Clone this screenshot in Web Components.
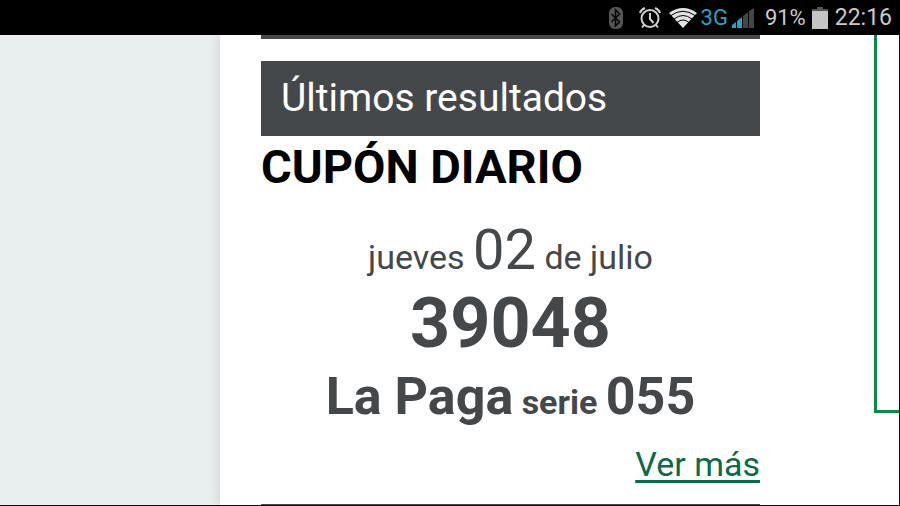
<!DOCTYPE html>
<html lang="es">
<head>
  <meta charset="utf-8">
  <meta name="viewport" content="width=device-width, initial-scale=1">
  <title>Últimos resultados</title>
  <style>
    body {
      margin: 0;
      background-color: #000;
      font-family: Roboto, "Liberation Sans", sans-serif;
    }
  </style>
</head>
<body>
  <phone-screen>
    <status-bar slot="status" network="3G" battery="91%" time="22:16"></status-bar>
    <results-panel heading="Últimos resultados">
      <draw-result></draw-result>
    </results-panel>
    <side-box slot="side"></side-box>
  </phone-screen>

<script>
class PhoneScreen extends HTMLElement {

  constructor() {
    super();
    this.shadowDOM = this.attachShadow({ mode: "open" });
    this.shadowDOM.innerHTML = `
      <style>
        :host {
          display: flex;
          flex-direction: column;
          height: 100vh;
          overflow: hidden;
        }
        .view {
          flex: 1;
          min-height: 0;
          display: flex;
          overflow: hidden;
          border-right: 1px solid #111;
          border-bottom: 1px solid #111;
          background-color: #e9eeee;
        }
        .page {
          flex: 1;
          display: flex;
          justify-content: space-between;
          margin-left: 220px;
          padding-left: 41px;
          background-color: #fff;
          box-shadow: 0 0 12px rgba(0, 0, 0, 0.14);
        }
        .content {
          flex: 1;
          margin-right: 114px;
        }
      </style>
      <slot name="status"></slot>
      <div class="view">
        <main class="page">
          <div class="content"><slot></slot></div>
          <slot name="side"></slot>
        </main>
      </div>`;
  }
}

class StatusBar extends HTMLElement {

  constructor() {
    super();
    this.shadowDOM = this.attachShadow({ mode: "open" });
  }

  connectedCallback() {
    this.render();
  }

  render() {
    this.shadowDOM.innerHTML = `
      <style>
        :host {
          display: flex;
          align-items: center;
          justify-content: flex-end;
          height: 35px;
          padding-right: 8px;
          background-color: #000;
          color: #c9c9c9;
          font-size: 23px;
          line-height: 36px;
        }
        svg {
          display: block;
        }
        .clock {
          margin-left: 15px;
        }
        .wifi {
          margin-left: 8px;
        }
        .network {
          margin-left: 4px;
          color: #2b9fc4;
          font-size: 22px;
        }
        .signal {
          margin-left: 4px;
        }
        .percent {
          margin-left: 11px;
          font-size: 22px;
        }
        .battery {
          margin: 0 7px 0 6px;
        }
      </style>
      <svg width="16" height="24" viewBox="0 0 16 24" role="img" aria-label="Bluetooth">
        <rect x="1" y="1" width="14" height="22" rx="6" fill="#555"/>
        <path d="M3.500 8l8 8-4 4V4l4 4-8 8" fill="none" stroke="#0a0a0a" stroke-width="1.600"/>
      </svg>
      <svg class="clock" width="22" height="24" viewBox="0 0 22 24" role="img" aria-label="Alarma">
        <g fill="none" stroke="#cfcfcf" stroke-width="2">
          <circle cx="11" cy="12.500" r="8.500"/>
          <path d="M11 7v6l3.500 4M1 7Q2 3.500 6 2M21 7Q20 3.500 16 2M5 19l-2 2.500M17 19l2 2.500"/>
        </g>
      </svg>
      <svg class="wifi" width="28" height="20" viewBox="0 0 28 20" role="img" aria-label="Wifi">
        <path d="M14 20L0 5Q14-5 28 5z" fill="#e2e2e2"/>
        <path d="M2 7.500Q14-1 26 7.500M5 11Q14 4 23 11M8 14.500Q14 9.500 20 14.500" fill="none" stroke="#000" stroke-width="1"/>
      </svg>
      <span class="network">${this.getAttribute("network")}</span>
      <svg class="signal" width="22" height="20" viewBox="0 0 22 20" role="img" aria-label="Cobertura">
        <path d="M0 20v-3l4-3v6zM5 20v-7l5-4v11z" fill="#2b9fc4"/>
        <path d="M11 20V8l5-4v16zM17 20V3l5-3v20z" fill="#454545"/>
      </svg>
      <span class="percent">${this.getAttribute("battery")}</span>
      <svg class="battery" width="16" height="22" viewBox="0 0 16 22" role="img" aria-label="Batería">
        <path d="M5 0h6v2h5v2H0V2h5z" fill="#555"/>
        <path d="M0 4h16v18H0z" fill="#c4c4c4"/>
      </svg>
      <time>${this.getAttribute("time")}</time>`;
  }
}

class ResultsPanel extends HTMLElement {

  constructor() {
    super();
    this.shadowDOM = this.attachShadow({ mode: "open" });
  }

  connectedCallback() {
    this.render();
  }

  render() {
    this.shadowDOM.innerHTML = `
      <style>
        :host {
          display: block;
        }
        .previous {
          height: 4px;
          margin-bottom: 22px;
          background-color: #45484b;
        }
        h1 {
          margin: 0;
          padding: 0 20px;
          background-color: #45484b;
          color: #fff;
          font-size: 39px;
          font-weight: 400;
          line-height: 75px;
        }
        section {
          padding-bottom: 10px;
          border-bottom: 2px solid #45484b;
        }
      </style>
      <div class="previous"></div>
      <section>
        <h1>${this.getAttribute("heading")}</h1>
        <slot></slot>
      </section>`;
  }
}

class DrawResult extends HTMLElement {

  constructor() {
    super();
    this.shadowDOM = this.attachShadow({ mode: "open" });
    this.shadowDOM.innerHTML = `
      <style>
        :host {
          display: block;
          color: #45484b;
          font-size: 34px;
          text-align: center;
        }
        h2 {
          margin: 0;
          color: #000;
          font-size: 47px;
          font-weight: 700;
          line-height: 62px;
          text-align: left;
        }
        p {
          margin: 0;
        }
        .date {
          margin-top: 20px;
          line-height: 64px;
        }
        .day {
          font-size: 56px;
        }
        .number {
          font-size: 70px;
          font-weight: 700;
          line-height: 68px;
        }
        .prize {
          margin-top: 8px;
          font-weight: 700;
          line-height: 64px;
        }
        .big {
          font-size: 52px;
        }
        .more {
          line-height: 60px;
          text-align: right;
        }
        a {
          color: #0b6b48;
          text-underline-offset: 4px;
          text-decoration-thickness: 3px;
        }
      </style>
      <h2>CUPÓN DIARIO</h2>
      <p class="date">jueves <span class="day">02</span> de julio</p>
      <p class="number">39048</p>
      <p class="prize"><span class="big">La Paga</span> serie <span class="big">055</span></p>
      <p class="more"><a href="#cupon-diario">Ver más</a></p>`;
  }
}

class SideBox extends HTMLElement {

  constructor() {
    super();
    this.shadowDOM = this.attachShadow({ mode: "open" });
    this.shadowDOM.innerHTML = `
      <style>
        :host {
          display: block;
          box-sizing: border-box;
          width: 25px;
          height: 378px;
          border-left: 3px solid #0a8a44;
          border-bottom: 3px solid #0a8a44;
        }
      </style>`;
  }
}

customElements.define("phone-screen", PhoneScreen);
customElements.define("status-bar", StatusBar);
customElements.define("results-panel", ResultsPanel);
customElements.define("draw-result", DrawResult);
customElements.define("side-box", SideBox);
</script>
</body>
</html>
